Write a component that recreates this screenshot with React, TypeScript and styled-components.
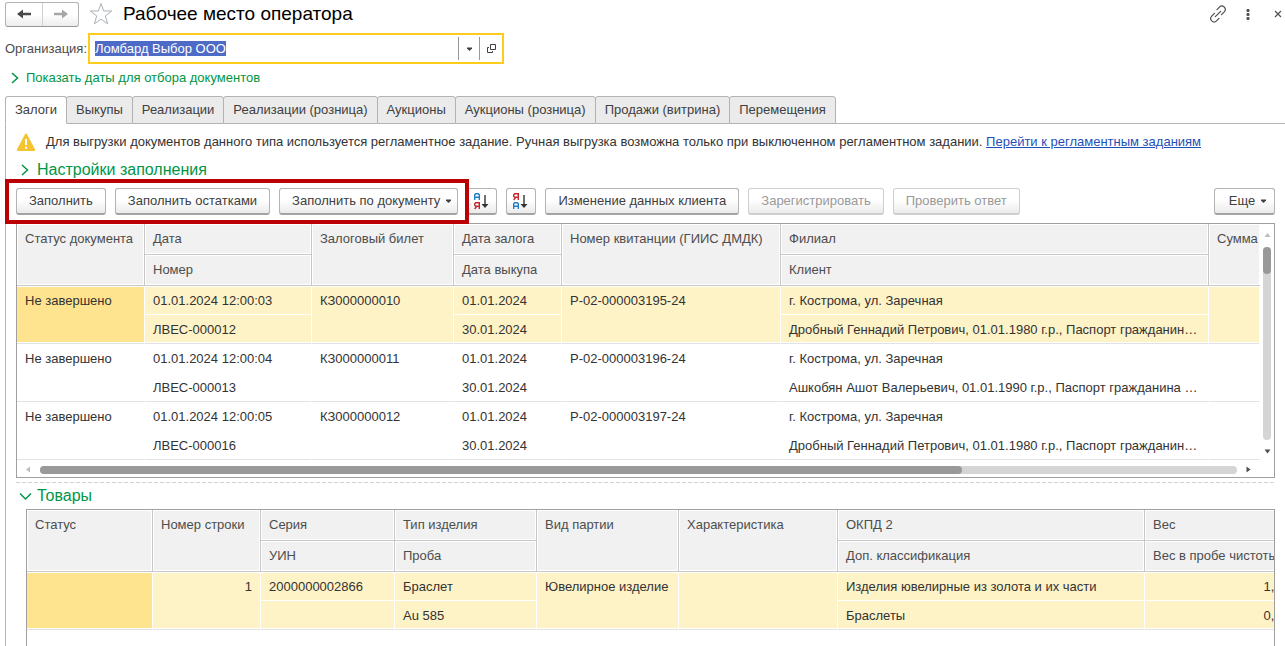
import { useEffect, useRef } from "react";
import styled, { createGlobalStyle, css } from "styled-components";

const GlobalStyle = createGlobalStyle`
  *, *::before, *::after { box-sizing: border-box; }
  body {
    margin: 0;
    background: #fff;
    color: #333;
    font: 13px/16px "Liberation Sans", Arial, sans-serif;
  }
  button, input { font: inherit; color: inherit; }
  svg { flex-shrink: 0; }
`;

const color = {
  line: "#b3b3b3",
  frame: "#a0a0a0",
  grid: "#c8c8c8",
  rowLine: "#e2e2e2",
  head: "#f1f1f1",
  green: "#009646",
  accent: "#ffcc1b",
  selected: "#fef2c7",
  current: "#ffe48f",
  muted: "#4d4d4d",
};

const Page = styled.div`
  display: flex;
  flex-direction: column;
  min-height: 100vh;
`;

const TitleBar = styled.header`
  display: flex;
  align-items: center;
  height: 28px;
  padding: 0 0 0 5px;
`;

const NavGroup = styled.div`
  display: flex;
  height: 25px;
  border: 1px solid ${color.line};
  border-bottom-color: #979797;
  border-radius: 3px;
  background: linear-gradient(#fff 50%, #ececec);
`;

const NavButton = styled.button`
  display: flex;
  align-items: center;
  justify-content: center;
  width: 36px;
  padding: 0;
  border: 0;
  background: none;
  color: #484848;

  &:disabled { color: #a6a6a6; }
  & + & { border-left: 1px solid #d0d0d0; }
`;

const PlainButton = styled.button`
  display: flex;
  align-items: center;
  justify-content: center;
  width: 14px;
  height: 26px;
  padding: 0;
  border: 0;
  background: none;
  color: #505050;
`;

const StarButton = styled(PlainButton)`
  width: 26px;
  margin: 0 9px;
`;

const WindowTools = styled.div`
  display: flex;
  gap: 16px;
`;

const Title = styled.h1`
  flex: 1;
  margin: 0;
  color: #000;
  font-size: 19px;
  font-weight: 400;
  line-height: 24px;
`;

const FieldRow = styled.div`
  display: flex;
  align-items: center;
  gap: 1px;
  height: 31px;
  margin-top: 5px;
  padding-left: 5px;
  color: ${color.muted};
`;

const Combo = styled.div`
  display: flex;
  align-items: center;
  width: 416px;
  height: 31px;
  border: 2px solid ${color.accent};
  background: #fff;
`;

const ComboInput = styled.input`
  flex: 1;
  min-width: 0;
  height: 17px;
  margin: 0 5px;
  padding: 0;
  border: 0;
  outline: 0;
  background: none;

  &::selection { background: #4d6bc6; color: #fff; }
`;

const ComboButton = styled.button`
  display: flex;
  align-items: center;
  justify-content: center;
  width: 21px;
  height: 23px;
  padding: 0;
  border: 0;
  border-left: 1px solid #999;
  background: none;
  color: #404040;

  &:last-child { width: 23px; }
`;

const Expander = styled.button<{ $large?: boolean }>`
  display: flex;
  align-items: center;
  gap: ${(p) => (p.$large ? 4 : 3)}px;
  padding: 0 0 0 ${(p) => (p.$large ? 3 : 0)}px;
  border: 0;
  background: none;
  color: ${color.green};
  font-size: ${(p) => (p.$large ? 16 : 13)}px;
  line-height: 20px;
`;

const DatesRow = styled.div`
  padding: 4px 0 8px 9px;
`;

const Tabs = styled.nav`
  display: flex;
  height: 28px;
  padding-left: 5px;

  &::after {
    flex: 1;
    border-bottom: 1px solid ${color.line};
    content: "";
  }
`;

const Tab = styled.button<{ $active?: boolean }>`
  margin-right: -1px;
  padding: 0 9px;
  border: 1px solid ${color.line};
  border-radius: 3px 3px 0 0;
  background: #ebebeb;
  color: #404040;
  white-space: nowrap;

  ${(p) =>
    p.$active &&
    css`
      border-bottom-color: #fff;
      background: #fff;
      z-index: 1;
    `}
`;

const Pane = styled.main`
  display: flex;
  flex: 1;
  flex-direction: column;
  margin-left: 5px;
  padding: 0 10px;
  border-left: 1px solid ${color.line};
`;

const Notice = styled.p`
  display: flex;
  align-items: center;
  gap: 10px;
  height: 36px;
  margin: 0;
  white-space: nowrap;

  a { color: #1f50b8; }
`;

const SectionHead = styled.div<{ $height: number }>`
  display: flex;
  align-items: center;
  height: ${(p) => p.$height}px;
`;

const Toolbar = styled.div`
  display: flex;
  gap: 9px;
  margin: 8px 0;
`;

const FillGroup = styled.div`
  position: relative;
  display: flex;
  gap: 9px;
`;

const Highlight = styled.div`
  position: absolute;
  inset: -9px -11px;
  z-index: 1;
  border: 4px solid #bb0004;
  pointer-events: none;
`;

const Button = styled.button`
  display: flex;
  align-items: center;
  justify-content: center;
  gap: 5px;
  height: 27px;
  padding: 0 12px;
  border: 1px solid ${color.line};
  border-bottom: 2px solid #a3a3a3;
  border-radius: 3px;
  background: linear-gradient(#fff 45%, #ebebeb);
  color: #404040;
  white-space: nowrap;

  &:disabled {
    border-color: #cfcfcf;
    color: #999;
  }
`;

const MenuButton = styled(Button)`
  min-width: 61px;
  padding-right: 5px;
`;

const IconButton = styled(Button)`
  width: 30px;
  padding: 0;
`;

const Spacer = styled.div`
  flex: 1;
`;

const GridFrame = styled.div`
  display: grid;
  grid-template-columns: minmax(0, 1fr) 14px;
  border: 1px solid ${color.frame};
`;

const GoodsFrame = styled.div`
  flex: 1;
  margin-left: 10px;
  overflow: hidden;
  border: 1px solid ${color.frame};
  border-bottom: 0;
`;

const Table = styled.table<{ $bleed?: number }>`
  width: calc(100% + ${(p) => p.$bleed ?? 0}px);
  table-layout: fixed;
  border-collapse: separate;
  border-spacing: 0;
`;

const cell = css`
  overflow: hidden;
  font-weight: 400;
  text-align: left;
  text-overflow: ellipsis;
  vertical-align: top;
  white-space: nowrap;
`;

const HeadCell = styled.th`
  ${cell}
  height: 31px;
  padding: 7px 0 7px 8px;
  border-right: 1px solid ${color.grid};
  border-bottom: 1px solid ${color.grid};
  background: ${color.head};
  box-shadow: inset 0 0 0 1px #fff;
  color: ${color.muted};
  text-overflow: clip;

  &[data-last="true"] { border-right: 0; }
`;

const Cell = styled.td<{ $selected?: boolean; $current?: boolean; $bottom?: boolean; $right?: boolean }>`
  ${cell}
  height: 29px;
  padding: 7px 8px 5px;
  border-right: 1px solid #fff;
  border-bottom: 1px solid ${(p) => (p.$bottom ? color.rowLine : "#fff")};
  background: ${(p) => (p.$current ? color.current : p.$selected ? color.selected : "#fff")};
  box-shadow: inset 0 ${(p) => (p.$bottom ? -1 : 1)}px #fff;
  text-align: ${(p) => (p.$right ? "right" : "left")};

  &[rowspan="2"] { box-shadow: inset 0 1px #fff, inset 0 -1px #fff; }
`;

const VBar = styled.div`
  display: flex;
  flex-direction: column;
  align-items: center;
  justify-content: space-between;
  padding: 8px 0 5px;
`;

const VTrack = styled.div`
  flex: 1;
  width: 8px;
  margin: 8px 0;
  border-radius: 4px;
  background: #d5d5d5;
`;

const VThumb = styled.div`
  height: 27px;
  border-radius: 4px;
  background: #999;
`;

const HBar = styled.div`
  display: flex;
  grid-column: 1 / -1;
  align-items: center;
  height: 17px;
  padding: 2px 22px 0 8px;
`;

const HTrack = styled.div`
  flex: 1;
  height: 8px;
  margin: 0 8px;
  border-radius: 4px;
  background: #d5d5d5;
`;

const HThumb = styled.div`
  width: 77%;
  height: 8px;
  border-radius: 4px;
  background: #999;
`;

const Divider = styled.hr`
  width: 100%;
  height: 1px;
  margin: 4px 0 0;
  border: 0;
  background: repeating-linear-gradient(90deg, #d3d3d3 0 4px, transparent 4px 6px);
`;

const Arrow = ({ left = false }: { left?: boolean }) => (
  <svg width="16" height="12" viewBox="0 0 16 12" fill="currentColor">
    <path d={left ? "M1 6l6-4.500v3.200h8v2.600H7v3.200z" : "M15 6L9 1.500v3.200H1v2.600h8v3.200z"} />
  </svg>
);

const Caret = () => (
  <svg width="7" height="4" viewBox="0 0 7 4" fill="currentColor">
    <path d="M1 0.500h5v1L3.500 4 1 1.500z" />
  </svg>
);

const Chevron = ({ open = false }: { open?: boolean }) => (
  <svg width="14" height="12" viewBox="0 0 14 12" fill="none" stroke="currentColor" strokeWidth="1.500">
    <path d={open ? "M1 3.500L6.500 9 12 3.500" : "M3 1l5.500 5L3 11"} />
  </svg>
);

const Triangle = ({ dir, faint = false }: { dir: "up" | "down" | "left" | "right"; faint?: boolean }) => {
  const paths = { up: "M3.500 1L6.500 5h-6z", down: "M3.500 5.500l3-4h-6z", left: "M1 3.500l4-3v6z", right: "M5.500 3.500l-4-3v6z" };
  return (
    <svg width="7" height="7" viewBox="0 0 7 7" fill={faint ? "#bdbdbd" : "#505050"}>
      <path d={paths[dir]} />
    </svg>
  );
};

const Star = () => (
  <svg width="24" height="24" viewBox="0 0 24 24" fill="none" stroke="#a9b0b8" strokeWidth="1">
    <path d="M12 1.500l2.700 7.500h8l-6.400 4.900 2.400 8L12 17.200l-6.700 4.700 2.400-8L1.300 9h8z" />
  </svg>
);

const LinkIcon = () => (
  <svg width="18" height="18" viewBox="0 0 18 18" fill="none" stroke="currentColor" strokeWidth="1.200" strokeLinecap="round">
    <path d="M8 4.700l2.400-2.500a3.300 3.300 0 0 1 4.900 4.600L12.500 9.700M10 13.300l-2.500 2.500a3.300 3.300 0 0 1-4.800-4.600L5.500 8.300M6.300 11.700l5.400-5.400" />
  </svg>
);

const Dots = () => (
  <svg width="4" height="13" viewBox="0 0 4 13" fill="currentColor">
    <rect x="0.500" y="1" width="3" height="3" rx="1" />
    <rect x="0.500" y="5" width="3" height="3" rx="1" />
    <rect x="0.500" y="9" width="3" height="3" rx="1" />
  </svg>
);

const Cross = () => (
  <svg width="8" height="8" viewBox="0 0 8 8" stroke="currentColor" strokeWidth="1.200">
    <path d="M1 1l6 6M7 1L1 7" />
  </svg>
);

const OpenIcon = () => (
  <svg width="9" height="9" viewBox="0 0 9 9" fill="none" stroke="currentColor">
    <path d="M3.500 0.500h5v5h-5zM2 3.500H0.500v5h5V7" />
  </svg>
);

const Warning = () => (
  <svg width="20" height="19" viewBox="0 0 20 19">
    <path d="M10 1.500L18.200 17H1.800z" fill="#f4c430" stroke="#f4c430" strokeWidth="2" strokeLinejoin="round" />
    <path d="M10 6v6M10 13.700v2" stroke="#fff" strokeWidth="2" />
  </svg>
);

const SortIcon = ({ reverse = false }: { reverse?: boolean }) => {
  const letterA = "M0.700 7V1.700l1-1h2.600l1 1V7M0.700 4.300h4.600";
  const letterYa = "M5.300 7V0.700H1.700l-1 1v1.600l1 1h3.600M2.700 4.300L0.700 7";
  return (
    <svg width="16" height="17" viewBox="0 0 16 17" fill="none" strokeWidth="1.400">
      <path d={reverse ? letterYa : letterA} stroke={reverse ? "#c1272d" : "#1f7fc4"} />
      <path d={reverse ? letterA : letterYa} transform="translate(0 9)" stroke={reverse ? "#1f7fc4" : "#c1272d"} />
      <path d="M11 2v10" stroke="#333" strokeWidth="1.400" />
      <path d="M7.500 11h7L11 15z" fill="#333" />
    </svg>
  );
};

type Column = { width?: number; head: [string] | [string, string] };

function DataTable({ columns, rows, bleed, numeric = [] }: {
  columns: Column[];
  rows: string[][][];
  bleed?: number;
  numeric?: number[];
}) {
  const last = columns.length - 1;
  return (
    <Table $bleed={bleed}>
      <colgroup>
        {columns.map((c, i) => (
          <col key={i} width={c.width} />
        ))}
      </colgroup>
      <thead>
        <tr>
          {columns.map((c, i) => (
            <HeadCell key={i} scope="col" rowSpan={c.head.length === 1 ? 2 : undefined} data-last={i === last}>
              {c.head[0]}
            </HeadCell>
          ))}
        </tr>
        <tr>
          {columns.map((c, i) =>
            c.head.length === 2 ? (
              <HeadCell key={i} scope="col" data-last={i === last}>
                {c.head[1]}
              </HeadCell>
            ) : null,
          )}
        </tr>
      </thead>
      {rows.map((row, r) => (
        <tbody key={r}>
          <tr>
            {row.map((v, i) => {
              const single = columns[i].head.length === 1;
              return (
                <Cell
                  key={i}
                  rowSpan={single ? 2 : undefined}
                  $selected={r === 0}
                  $current={r === 0 && i === 0}
                  $bottom={single}
                  $right={numeric.includes(i)}
                >
                  {v[0]}
                </Cell>
              );
            })}
          </tr>
          <tr>
            {row.map((v, i) =>
              columns[i].head.length === 2 ? (
                <Cell key={i} $selected={r === 0} $bottom $right={numeric.includes(i)}>
                  {v[1]}
                </Cell>
              ) : null,
            )}
          </tr>
        </tbody>
      ))}
    </Table>
  );
}

const pledgeColumns: Column[] = [
  { width: 128, head: ["Статус документа"] },
  { width: 167, head: ["Дата", "Номер"] },
  { width: 142, head: ["Залоговый билет"] },
  { width: 108, head: ["Дата залога", "Дата выкупа"] },
  { width: 219, head: ["Номер квитанции (ГИИС ДМДК)"] },
  { head: ["Филиал", "Клиент"] },
  { width: 51, head: ["Сумма"] },
];

const branch = "г. Кострома, ул. Заречная";
const drobny = "Дробный Геннадий Петрович, 01.01.1980 г.р., Паспорт гражданина РФ";
const ashkobyan = "Ашкобян Ашот Валерьевич, 01.01.1990 г.р., Паспорт гражданина РФ";

const pledgeRows = [
  ["03", "ЛВЕС-000012", "КЗ000000010", "Р-02-000003195-24", drobny],
  ["04", "ЛВЕС-000013", "КЗ000000011", "Р-02-000003196-24", ashkobyan],
  ["05", "ЛВЕС-000016", "КЗ000000012", "Р-02-000003197-24", drobny],
].map(([sec, number, ticket, receipt, client]) => [
  ["Не завершено"],
  [`01.01.2024 12:00:${sec}`, number],
  [ticket],
  ["01.01.2024", "30.01.2024"],
  [receipt],
  [branch, client],
  [""],
]);

const goodsColumns: Column[] = [
  { width: 126, head: ["Статус"] },
  { width: 108, head: ["Номер строки"] },
  { width: 134, head: ["Серия", "УИН"] },
  { width: 142, head: ["Тип изделия", "Проба"] },
  { width: 142, head: ["Вид партии"] },
  { width: 159, head: ["Характеристика"] },
  { head: ["ОКПД 2", "Доп. классификация"] },
  { width: 160, head: ["Вес", "Вес в пробе чистоты"] },
];

const goodsRows = [
  [
    [""],
    ["1"],
    ["2000000002866", ""],
    ["Браслет", "Au 585"],
    ["Ювелирное изделие"],
    [""],
    ["Изделия ювелирные из золота и их части", "Браслеты"],
    ["1,000", "0,585"],
  ],
];

const tabs = [
  "Залоги",
  "Выкупы",
  "Реализации",
  "Реализации (розница)",
  "Аукционы",
  "Аукционы (розница)",
  "Продажи (витрина)",
  "Перемещения",
];

export default function App() {
  const organization = useRef<HTMLInputElement>(null);

  useEffect(() => {
    organization.current?.focus();
    organization.current?.select();
  }, []);

  return (
    <Page>
      <GlobalStyle />
      <TitleBar>
        <NavGroup>
          <NavButton aria-label="Назад"><Arrow left /></NavButton>
          <NavButton aria-label="Вперед" disabled><Arrow /></NavButton>
        </NavGroup>
        <StarButton aria-label="В избранное"><Star /></StarButton>
        <Title>Рабочее место оператора</Title>
        <WindowTools>
          <PlainButton aria-label="Ссылка"><LinkIcon /></PlainButton>
          <PlainButton aria-label="Меню"><Dots /></PlainButton>
          <PlainButton aria-label="Закрыть"><Cross /></PlainButton>
        </WindowTools>
      </TitleBar>

      <FieldRow>
        <label htmlFor="organization">Организация:</label>
        <Combo>
          <ComboInput id="organization" ref={organization} defaultValue="Ломбард Выбор ООО" />
          <ComboButton aria-label="Выбрать"><Caret /></ComboButton>
          <ComboButton aria-label="Открыть"><OpenIcon /></ComboButton>
        </Combo>
      </FieldRow>

      <DatesRow>
        <Expander><Chevron />Показать даты для отбора документов</Expander>
      </DatesRow>

      <Tabs>
        {tabs.map((name, i) => (
          <Tab key={name} $active={i === 0}>{name}</Tab>
        ))}
      </Tabs>

      <Pane>
        <Notice>
          <Warning />
          <span>
            Для выгрузки документов данного типа используется регламентное задание. Ручная выгрузка возможна только при
            выключенном регламентном задании. <a href="#tasks">Перейти к регламентным заданиям</a>
          </span>
        </Notice>
        <SectionHead $height={20}>
          <Expander $large><Chevron />Настройки заполнения</Expander>
        </SectionHead>

        <Toolbar>
          <FillGroup>
            <Button>Заполнить</Button>
            <Button>Заполнить остатками</Button>
            <MenuButton>Заполнить по документу<Caret /></MenuButton>
            <Highlight />
          </FillGroup>
          <IconButton aria-label="Сортировать по возрастанию"><SortIcon /></IconButton>
          <IconButton aria-label="Сортировать по убыванию"><SortIcon reverse /></IconButton>
          <Button>Изменение данных клиента</Button>
          <Button disabled>Зарегистрировать</Button>
          <Button disabled>Проверить ответ</Button>
          <Spacer />
          <MenuButton>Еще<Caret /></MenuButton>
        </Toolbar>

        <GridFrame>
          <DataTable columns={pledgeColumns} rows={pledgeRows} />
          <VBar>
            <Triangle dir="up" faint />
            <VTrack><VThumb /></VTrack>
            <Triangle dir="down" />
          </VBar>
          <HBar>
            <Triangle dir="left" faint />
            <HTrack><HThumb /></HTrack>
            <Triangle dir="right" />
          </HBar>
        </GridFrame>

        <Divider />
        <SectionHead $height={26}>
          <Expander $large><Chevron open />Товары</Expander>
        </SectionHead>
        <GoodsFrame>
          <DataTable columns={goodsColumns} rows={goodsRows} bleed={31} numeric={[1, 7]} />
        </GoodsFrame>
      </Pane>
    </Page>
  );
}
